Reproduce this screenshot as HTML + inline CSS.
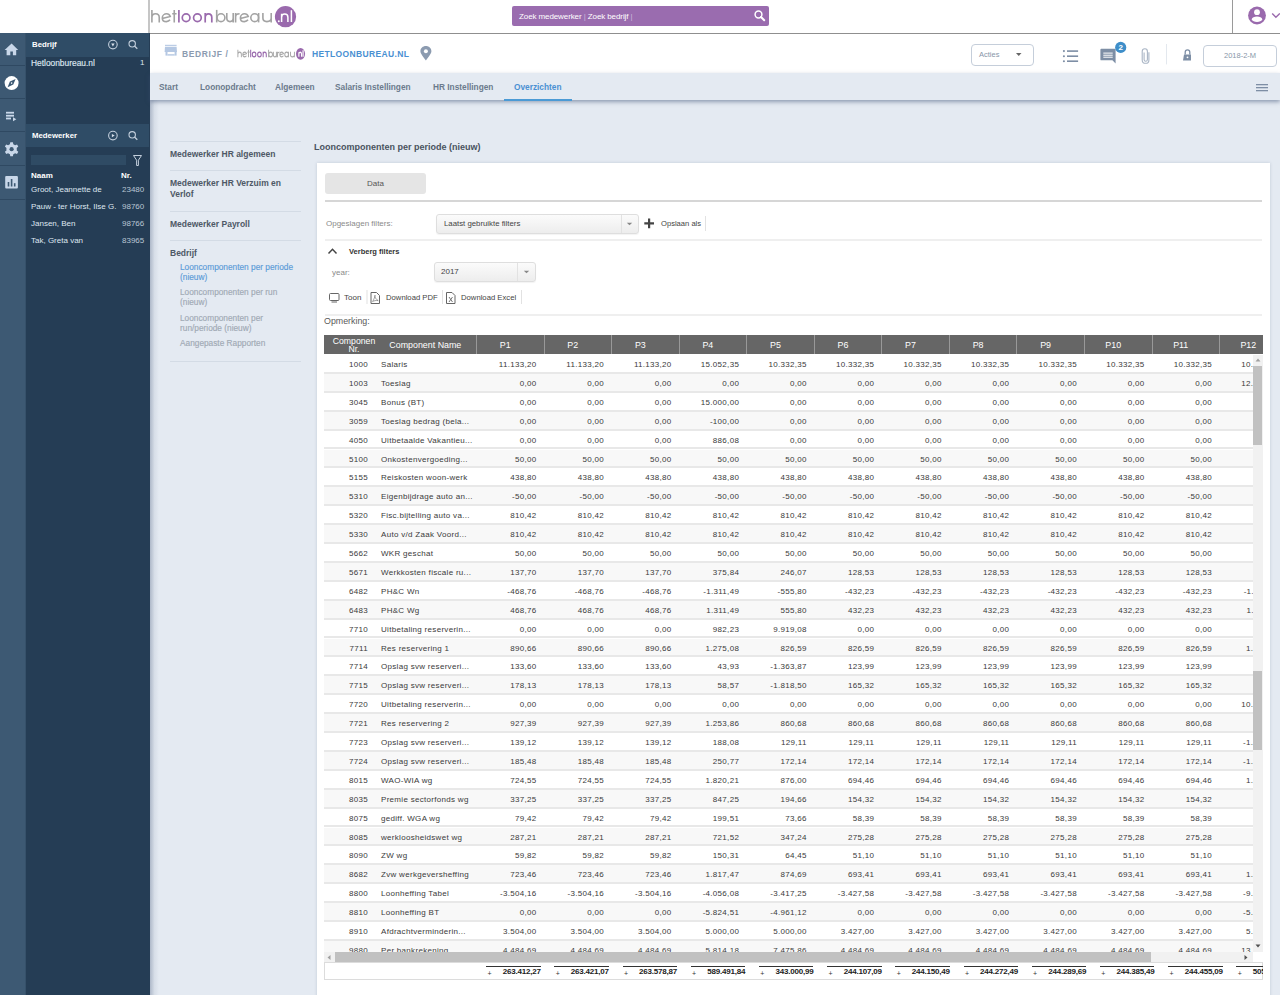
<!DOCTYPE html>
<html><head><meta charset="utf-8">
<style>
*{box-sizing:border-box;margin:0;padding:0}
html,body{width:1280px;height:995px;overflow:hidden}
body{position:relative;background:#e4eaf2;font-family:"Liberation Sans",sans-serif;color:#333}
.a{position:absolute}
svg.a{overflow:visible}
/* top bar */
#top{left:0;top:0;width:1280px;height:34px;background:#fff;border-bottom:1px solid #8f8f8f}
#vl1{left:148px;top:0;width:2px;height:33px;background:#c6c6c6}
#vl2{left:1232px;top:0;width:1px;height:33px;background:#9a9a9a}
#search{left:512px;top:6px;width:257px;height:20px;background:#9a6caf;border-radius:2px}
#search span{position:absolute;left:7px;top:6px;font-size:8px;color:#fff;white-space:nowrap;letter-spacing:-0.1px}
/* rails */
#rail{left:0;top:33px;width:26px;height:962px;background:#3d5973;border-right:1px solid #36516a}
.rsep{left:0;width:25px;height:1px;background:#2f4962}
#side{left:26px;top:33px;width:123.5px;height:962px;background:#253d55}
.sh{left:26px;width:123px;height:23px;background:#2f4c66}
.sht{font-size:7.8px;font-weight:bold;color:#fff;white-space:nowrap}
.st{font-size:8px;color:#dfe7f0;white-space:nowrap}
.stb{font-size:8px;color:#fff;font-weight:bold;white-space:nowrap}
.sn{font-size:8px;color:#b9c6d4;white-space:nowrap}
/* breadcrumb */
#bc{left:150px;top:34px;width:1130px;height:39px;background:#fff}
#tabs{left:150px;top:73px;width:1130px;height:27px;background:#e4eaf2;box-shadow:0 2px 4px rgba(60,80,115,.5)}
.tab{top:82px;font-size:8.3px;font-weight:bold;color:#6b7a8c;white-space:nowrap}
#shadowL{left:150px;top:100px;width:9px;height:895px;background:linear-gradient(to right,rgba(60,80,115,.32),rgba(60,80,115,.08) 50%,rgba(60,80,115,0))}
/* left menu */
.ml{left:170px;width:131px;height:1px;background:#d3dbe5}
.mt{left:170px;font-size:8.5px;font-weight:bold;color:#4e5866;white-space:nowrap;line-height:11px}
.ms{left:180px;font-size:8.3px;color:#a0a9b4;white-space:nowrap;line-height:10px;-webkit-text-stroke:0.15px currentColor}
/* card */
#title{left:314px;top:142px;font-size:9px;font-weight:bold;color:#49535f;white-space:nowrap}
#card{left:317px;top:163px;width:953px;height:840px;background:#fff;box-shadow:0 0 3px rgba(40,60,90,.18)}
.ln{height:2px;background:#efefef}
.lbl{font-size:8px;color:#8a8a8a;white-space:nowrap}
.sel{background:linear-gradient(#fbfbfb,#ededed);border:1px solid #dedede;border-radius:3px;box-shadow:0 1px 1px rgba(0,0,0,.05)}
.vs{width:1px;background:#e2e2e2}
/* table */
#tbl{left:324px;top:335px;width:939px;height:645px;overflow:hidden}
#thead{left:0;top:0;width:939px;height:19px;background:#666}
.th{position:absolute;top:0;height:19px;color:#fff;font-size:8.9px;text-align:center;white-space:nowrap}
.nrh{left:0;width:60px;font-size:8.7px;line-height:8px;top:2px}
.nmh{left:55.3px;width:92px;line-height:21px}
.ph{width:67.5px;line-height:21px;border-left:1px solid #999;padding-right:10px}
#tbody{left:0;top:20px;width:929px;height:597.4px;overflow:hidden}
.r{position:absolute;left:0;width:929px;height:18.9px;background:#fff;border-bottom:2px solid #e8e8e8}
.r.odd{background:#f8f8f8}
.r span{position:absolute;top:5px;font-size:8px;color:#3a3a3a;white-space:nowrap;line-height:9px;letter-spacing:0.3px}
.nr{left:0;width:44px;text-align:right}
.nm{left:57px}
.pv{width:60.5px;text-align:right}
#vsb{left:929px;top:20px;width:10px;height:597.4px;background:#f1f1f1}
#hsb{left:0;top:617.4px;width:929px;height:10px;background:#f1f1f1}
#tot{left:0;top:627.4px;width:939px;height:17.6px;border:1px solid #dcdcdc;background:#fff}
.tc{position:absolute;top:3px;width:68.2px;height:14px}
.tc .plus{position:absolute;left:15px;top:4px;font-size:7px;color:#333}
.tc .tv{position:absolute;right:0;width:54.4px;top:0;font-size:8px;font-weight:bold;text-align:right;color:#222;border-top:1px solid #333;padding-top:1px;line-height:8px;letter-spacing:-0.2px}
</style></head><body>
<div id="top" class="a"></div>
<div id="vl1" class="a"></div>
<div id="vl2" class="a"></div>
<!-- logo -->
<svg class="a" style="left:0;top:0" width="300" height="34" viewBox="0 0 300 34">
 <g fill="none" stroke="#a3a3a3" stroke-width="1.6">
  <path d="M151.9,9.9V22.4M151.9,17.6C151.9,15 153.6,13.8 155.6,13.8C157.6,13.8 159.25,15 159.25,17.6V22.4"/>
  <path d="M162.3,18.6L170.2,16.4C169.6,14.8 168.3,13.8 166.6,13.8C164.3,13.8 162.3,15.6 162.3,17.9C162.3,20 164,21.6 166.4,21.6C167.9,21.6 169.2,20.9 170,19.8"/>
  <path d="M174.25,9.9V22.4M172.2,13.8H176.6"/>
  <path d="M216.7,9.9V22.4"/><circle cx="221" cy="17.7" r="3.9"/>
  <path d="M226.8,13V18C226.8,20.4 228.3,21.6 230,21.6C231.7,21.6 233.2,20.4 233.2,18V13V22.4"/>
  <path d="M235.6,13V22.4M235.6,17C235.6,14.9 237,13.8 239.6,13.8"/>
  <path d="M240.4,18.6L248.2,16.4C247.6,14.8 246.3,13.8 244.6,13.8C242.3,13.8 240.4,15.6 240.4,17.9C240.4,20 242,21.6 244.4,21.6C245.9,21.6 247.2,20.9 248,19.8"/>
  <circle cx="254.7" cy="17.7" r="3.9"/><path d="M258.6,13V22.4"/>
  <path d="M262.9,13V18C262.9,20.4 264.6,21.6 266.9,21.6C269.2,21.6 271.2,20.4 271.2,18V13V22.4"/>
 </g>
 <g fill="none" stroke="#9a6aad" stroke-width="1.7">
  <path d="M178.9,9.9V22.4"/>
  <circle cx="186.1" cy="17.7" r="3.85"/><circle cx="197.4" cy="17.7" r="3.85"/>
  <path d="M205.2,13V22.4M205.2,17.6C205.2,15 206.8,13.8 208.5,13.8C210.2,13.8 211.8,15 211.8,17.6V22.4"/>
 </g>
 <circle cx="285.5" cy="16.7" r="10.6" fill="#9a6aad"/>
 <g fill="none" stroke="#fff" stroke-width="1.5">
  <path d="M281.6,13.8V22M281.6,17.2C281.6,15 282.9,14 284.7,14C286.5,14 287.9,15 287.9,17.2V22"/>
  <path d="M291.4,10.2V22"/>
 </g>
 <circle cx="278.8" cy="21.2" r="0.95" fill="#fff"/>
</svg>
<div id="search" class="a"><span>Zoek medewerker <span style="position:static;color:#cdb6da">|</span> Zoek bedrijf <span style="position:static;color:#cdb6da">|</span></span></div>
<svg class="a" style="left:753px;top:9px" width="14" height="14" viewBox="0 0 14 14"><circle cx="5.5" cy="5.5" r="3.4" fill="none" stroke="#fff" stroke-width="1.5"/><path d="M8,8L11.2,11.2" stroke="#fff" stroke-width="2" stroke-linecap="round"/></svg>
<!-- user icon -->
<svg class="a" style="left:1240px;top:0" width="40" height="34" viewBox="1240 0 40 34">
 <circle cx="1257" cy="15.5" r="8.9" fill="#9a6aad"/>
 <circle cx="1257" cy="12.2" r="2.9" fill="#fff"/>
 <path d="M1251.6,19.6C1252.2,17.4 1254.3,16.6 1257,16.6C1259.7,16.6 1261.8,17.4 1262.4,19.6C1261.6,21.2 1259.5,22.1 1257,22.1C1254.5,22.1 1252.4,21.2 1251.6,19.6Z" fill="#fff"/>
 <path d="M1272.2,13.4L1275.9,17.2L1279.8,13.4" fill="none" stroke="#9a6aad" stroke-width="1.4"/>
</svg>

<div id="rail" class="a"></div>
<div class="a rsep" style="top:65px"></div>
<div class="a rsep" style="top:98px"></div>
<div class="a rsep" style="top:131px"></div>
<div class="a rsep" style="top:165px"></div>
<div class="a rsep" style="top:199px"></div>
<svg class="a" style="left:0;top:34px" width="26" height="170" viewBox="0 34 26 170">
 <path d="M4.6,49.9L11.6,43.6L18.2,49.9H16.2V55.2H12.9V51.6H10.3V55.2H6.6V49.9Z" fill="#c9d7e9"/>
 <circle cx="11.6" cy="83.1" r="7" fill="#fff"/>
 <path d="M7.6,87.2L9.9,81.6L15.6,79L13.3,84.6Z" fill="#3d5973"/><circle cx="11.6" cy="83.1" r="0.8" fill="#fff"/>
 <g fill="#c9d7e9"><rect x="6" y="111.8" width="8" height="1.8"/><rect x="6" y="114.8" width="8" height="1.8"/><rect x="6" y="117.6" width="5" height="1.8"/><path d="M13,117.3L16.3,119.3L13,121.3Z"/></g>
 <g transform="translate(11.6 149.2)" fill="#c9d7e9">
  <path d="M-1.3,-7H1.3L1.7,-5C2.4,-4.8 3,-4.4 3.5,-4L5.4,-4.8L6.7,-2.6L5.1,-1.3C5.2,-0.9 5.2,-0.4 5.2,0C5.2,0.4 5.2,0.9 5.1,1.3L6.7,2.6L5.4,4.8L3.5,4C3,4.4 2.4,4.8 1.7,5L1.3,7H-1.3L-1.7,5C-2.4,4.8 -3,4.4 -3.5,4L-5.4,4.8L-6.7,2.6L-5.1,1.3C-5.2,0.9 -5.2,0.4 -5.2,0C-5.2,-0.4 -5.2,-0.9 -5.1,-1.3L-6.7,-2.6L-5.4,-4.8L-3.5,-4C-3,-4.4 -2.4,-4.8 -1.7,-5Z"/>
 </g>
 <circle cx="11.6" cy="149.2" r="2.1" fill="#3d5973"/>
 <rect x="5.2" y="175.9" width="12.7" height="12.5" rx="1" fill="#c9d7e9"/>
 <g fill="#3d5973"><rect x="7.7" y="182" width="1.6" height="4.5"/><rect x="10.8" y="179" width="1.6" height="7.5"/><rect x="13.9" y="183.2" width="1.6" height="3.3"/></g>
</svg>
<div id="side" class="a"></div>
<div class="a sh" style="top:33px;height:24px"></div>
<div class="a sht" style="left:32px;top:40px">Bedrijf</div>
<div class="a st" style="left:31px;top:57.5px;font-size:8.4px;-webkit-text-stroke:0.15px #dfe7f0">Hetloonbureau.nl</div>
<div class="a st" style="left:140px;top:58px">1</div>
<div class="a sh" style="top:124px"></div>
<div class="a sht" style="left:32px;top:131px">Medewerker</div>
<svg class="a" style="left:100px;top:34px" width="49" height="140" viewBox="100 34 49 140">
 <g fill="none" stroke="#c3cfdc" stroke-width="1.1">
  <circle cx="112.9" cy="44.6" r="4.3"/><circle cx="132.2" cy="43.8" r="3.2"/><path d="M134.5,46.1L137.3,48.7" stroke-width="1.3"/>
  <circle cx="112.9" cy="135.6" r="4.3"/><circle cx="132.2" cy="134.8" r="3.2"/><path d="M134.5,137.1L137.3,139.7" stroke-width="1.3"/>
  <path d="M133.5,155.5H141.5L138.4,160.2V165.5H136.6V160.2Z" stroke-width="1"/>
 </g>
 <path d="M111.2,43.6L114.6,43.6L112.9,46.4Z" fill="#d8e0ea"/>
 <path d="M111.2,134.6L114.6,134.6L112.9,137.4Z" fill="#d8e0ea" transform="rotate(-90 112.9 135.6)"/>
</svg>
<div class="a" style="left:31px;top:155px;width:95px;height:10px;background:#2f4b64"></div>
<div class="a stb" style="left:31px;top:171px">Naam</div>
<div class="a stb" style="left:121px;top:171px">Nr.</div>
<div class="a st" style="left:31px;top:185px">Groot, Jeannette de</div><div class="a sn" style="left:122px;top:185px">23480</div>
<div class="a st" style="left:31px;top:202px">Pauw - ter Horst, Ilse G.</div><div class="a sn" style="left:122px;top:202px">98760</div>
<div class="a st" style="left:31px;top:219px">Jansen, Ben</div><div class="a sn" style="left:122px;top:219px">98766</div>
<div class="a st" style="left:31px;top:236px">Tak, Greta van</div><div class="a sn" style="left:122px;top:236px">83965</div>

<div id="bc" class="a"></div>
<svg class="a" style="left:160px;top:40px" width="22" height="20" viewBox="160 40 22 20">
 <g fill="#b5c8e3"><rect x="165" y="44.8" width="11.6" height="1.1"/><path d="M165,46.8H176.6L177,51.9H164.6Z"/><rect x="165.5" y="51.9" width="2" height="3.7"/><rect x="174.6" y="51.9" width="2" height="3.7"/><rect x="167.5" y="54.2" width="7.1" height="1.4"/></g>
</svg>
<div class="a" style="left:182px;top:48.8px;font-size:8.5px;font-weight:bold;letter-spacing:0.6px;color:#8c9bb0;white-space:nowrap">BEDRIJF /</div>
<svg class="a" style="left:230px;top:40px" width="85" height="26" viewBox="230 40 85 26">
 <g transform="translate(165.88 43.86) scale(0.474 0.6)">
 <g fill="none" stroke="#a8a8a8" stroke-width="2">
  <path d="M151.9,9.9V22.4M151.9,17.6C151.9,15 153.6,13.8 155.6,13.8C157.6,13.8 159.25,15 159.25,17.6V22.4"/>
  <path d="M162.3,18.6L170.2,16.4C169.6,14.8 168.3,13.8 166.6,13.8C164.3,13.8 162.3,15.6 162.3,17.9C162.3,20 164,21.6 166.4,21.6C167.9,21.6 169.2,20.9 170,19.8"/>
  <path d="M174.25,9.9V22.4M172.2,13.8H176.6"/>
  <path d="M216.7,9.9V22.4"/><circle cx="221" cy="17.7" r="3.9"/>
  <path d="M226.8,13V18C226.8,20.4 228.3,21.6 230,21.6C231.7,21.6 233.2,20.4 233.2,18V13V22.4"/>
  <path d="M235.6,13V22.4M235.6,17C235.6,14.9 237,13.8 239.6,13.8"/>
  <path d="M240.4,18.6L248.2,16.4C247.6,14.8 246.3,13.8 244.6,13.8C242.3,13.8 240.4,15.6 240.4,17.9C240.4,20 242,21.6 244.4,21.6C245.9,21.6 247.2,20.9 248,19.8"/>
  <circle cx="254.7" cy="17.7" r="3.9"/><path d="M258.6,13V22.4"/>
  <path d="M262.9,13V18C262.9,20.4 264.6,21.6 266.9,21.6C269.2,21.6 271.2,20.4 271.2,18V13V22.4"/>
 </g>
 <g fill="none" stroke="#9a6aad" stroke-width="2.2">
  <path d="M178.9,9.9V22.4"/><circle cx="186.1" cy="17.7" r="3.85"/><circle cx="197.4" cy="17.7" r="3.85"/>
  <path d="M205.2,13V22.4M205.2,17.6C205.2,15 206.8,13.8 208.5,13.8C210.2,13.8 211.8,15 211.8,17.6V22.4"/>
 </g>
 </g>
 <g transform="translate(178.07 44.48) scale(0.429 0.561)">
 <circle cx="285.5" cy="16.7" r="10.6" fill="#9a6aad"/>
 <g fill="none" stroke="#fff" stroke-width="2.6"><path d="M281.6,13.8V22M281.6,17.2C281.6,15 282.9,14 284.7,14C286.5,14 287.9,15 287.9,17.2V22"/><path d="M291.4,10.2V22"/></g>
 </g>
</svg>
<div class="a" style="left:312px;top:48.8px;font-size:8.5px;font-weight:bold;letter-spacing:0.35px;color:#4a90d2;white-space:nowrap">HETLOONBUREAU.NL</div>
<svg class="a" style="left:418px;top:44px" width="16" height="18" viewBox="418 44 16 18">
 <path d="M425.9,60.5C423.5,57.2 420.4,53.4 420.4,51.2C420.4,48.2 422.9,46 425.9,46C428.9,46 431.4,48.2 431.4,51.2C431.4,53.4 428.3,57.2 425.9,60.5Z" fill="#8c9bb0"/>
 <circle cx="425.9" cy="51.2" r="2" fill="#fff"/>
</svg>

<div class="a" style="left:971px;top:44px;width:63px;height:22px;border:1px solid #c5ceda;border-radius:4px;background:#fff"></div>
<div class="a" style="left:979px;top:50px;font-size:7.5px;color:#8796a8">Acties</div>
<svg class="a" style="left:1014px;top:51px" width="10" height="8"><path d="M2,2H7.5L4.75,5Z" fill="#666"/></svg>
<svg class="a" style="left:1060px;top:44px" width="140" height="22" viewBox="1060 44 140 22">
 <g fill="#7d8ea5">
  <circle cx="1063.9" cy="51.1" r="1.05"/><circle cx="1063.9" cy="56.2" r="1.05"/><circle cx="1063.9" cy="61.2" r="1.05"/>
  <rect x="1067" y="50.3" width="11.1" height="1.6"/><rect x="1067" y="55.4" width="11.1" height="1.6"/><rect x="1067" y="60.4" width="11.1" height="1.6"/>
  <path d="M1101.3,48.8H1114.7Q1115.6,48.8 1115.6,49.7V63.4L1112.4,60.3H1101.3Q1100.4,60.3 1100.4,59.4V49.7Q1100.4,48.8 1101.3,48.8Z"/>
  <path d="M1184,54.4H1191V60.5H1183Z"/>
 </g>
 <g fill="#fff"><rect x="1103.3" y="52.6" width="9.4" height="1"/><rect x="1103.3" y="54.7" width="9.4" height="1"/><rect x="1103.3" y="56.7" width="9.4" height="1"/></g>
 <path d="M1185.2,54.4V52.3C1185.2,50.9 1186.2,49.9 1187.5,49.9C1188.8,49.9 1189.8,50.9 1189.8,52.3V54.4" fill="none" stroke="#7d8ea5" stroke-width="1.3"/>
 <circle cx="1187.5" cy="57.3" r="0.9" fill="#fff"/>
 <circle cx="1120.7" cy="47.4" r="5.6" fill="#3e8ec9"/>
 <text x="1120.7" y="50.3" font-family="Liberation Sans" font-size="8" font-weight="bold" fill="#fff" text-anchor="middle">2</text>
 <path d="M1148.9,52.2V59.9C1148.9,62.1 1147.6,63.3 1145.7,63.3C1143.8,63.3 1142.2,62.1 1142.2,59.9V51.4C1142.2,49.6 1143.3,48.7 1144.9,48.7C1146.5,48.7 1147.4,49.6 1147.4,51.4V59.4C1147.4,60.6 1146.6,61.2 1145.7,61.2C1144.8,61.2 1144.1,60.6 1144.1,59.4V52.5" fill="none" stroke="#a9b5c5" stroke-width="1.1"/>
 <rect x="1166" y="44" width="1" height="20.4" fill="#e3e8ee"/>
</svg>
<div class="a" style="left:1203px;top:45px;width:74px;height:22px;border:1px solid #c5ceda;border-radius:4px;background:#fff"></div>
<div class="a" style="left:1224px;top:51px;font-size:7.5px;color:#8796a8">2018-2-M</div>

<div id="tabs" class="a"></div>
<div class="a tab" style="left:159px">Start</div>
<div class="a tab" style="left:200px">Loonopdracht</div>
<div class="a tab" style="left:275px">Algemeen</div>
<div class="a tab" style="left:335px">Salaris Instellingen</div>
<div class="a tab" style="left:433px">HR Instellingen</div>
<div class="a tab" style="left:514px;color:#4a90d2">Overzichten</div>
<div class="a" style="left:504px;top:99px;width:68px;height:2px;background:#4b9ad5"></div>
<svg class="a" style="left:1254px;top:82px" width="16" height="12"><g fill="#7d8ea5"><rect x="2" y="2" width="12" height="1.3"/><rect x="2" y="5" width="12" height="1.3"/><rect x="2" y="8" width="12" height="1.3"/></g></svg>
<div id="shadowL" class="a"></div>

<div class="a ml" style="top:141px"></div>
<div class="a mt" style="top:149px">Medewerker HR algemeen</div>
<div class="a ml" style="top:170px"></div>
<div class="a mt" style="top:178px">Medewerker HR Verzuim en<br>Verlof</div>
<div class="a ml" style="top:211px"></div>
<div class="a mt" style="top:219px">Medewerker Payroll</div>
<div class="a ml" style="top:240px"></div>
<div class="a mt" style="top:248px">Bedrijf</div>
<div class="a ms" style="top:262px;color:#5b9bd8">Looncomponenten per periode<br>(nieuw)</div>
<div class="a ms" style="top:287px">Looncomponenten per run<br>(nieuw)</div>
<div class="a ms" style="top:313px">Looncomponenten per<br>run/periode (nieuw)</div>
<div class="a ms" style="top:338px">Aangepaste Rapporten</div>
<div class="a ml" style="top:361px"></div>

<div id="title" class="a">Looncomponenten per periode (nieuw)</div>
<div id="card" class="a"></div>
<div class="a" style="left:325px;top:173px;width:101px;height:21px;background:#e5e5e5;border-radius:3px"></div>
<div class="a" style="left:367px;top:179px;font-size:8px;color:#555">Data</div>
<div class="a" style="left:325px;top:200px;width:937px;height:2px;background:#d6d6d6"></div>
<div class="a lbl" style="left:326px;top:219px">Opgeslagen filters:</div>
<div class="a sel" style="left:436px;top:214px;width:203px;height:20px"></div>
<div class="a vs" style="left:621px;top:215px;height:18px"></div>
<svg class="a" style="left:626px;top:222px" width="8" height="4"><path d="M0.8,0.8H6.2L3.5,3.2Z" fill="#888"/></svg>
<div class="a" style="left:444px;top:219px;font-size:7.8px;color:#444">Laatst gebruikte filters</div>
<svg class="a" style="left:644px;top:218px" width="11" height="11"><path d="M4,0.5H6.2V4.3H10V6.5H6.2V10.3H4V6.5H0.3V4.3H4Z" fill="#444"/></svg>
<div class="a" style="left:661px;top:219px;font-size:7.6px;color:#444">Opslaan als</div>
<div class="a vs" style="left:705px;top:216px;height:15px"></div>
<div class="a ln" style="left:325px;top:239px;width:937px"></div>
<svg class="a" style="left:327px;top:247px" width="11" height="8"><path d="M1.5,6.5L5.5,2.3L9.5,6.5" fill="none" stroke="#444" stroke-width="1.5"/></svg>
<div class="a" style="left:349px;top:247px;font-size:7.5px;font-weight:bold;color:#333">Verberg filters</div>
<div class="a lbl" style="left:332px;top:268px">year:</div>
<div class="a sel" style="left:434px;top:262px;width:102px;height:20px"></div>
<div class="a vs" style="left:517px;top:263px;height:18px"></div>
<svg class="a" style="left:523px;top:270px" width="8" height="4"><path d="M0.8,0.8H6.2L3.5,3.2Z" fill="#888"/></svg>
<div class="a" style="left:441px;top:267px;font-size:8px;color:#444">2017</div>
<svg class="a" style="left:326px;top:290px" width="200" height="16" viewBox="326 290 200 16">
 <g fill="none" stroke="#666" stroke-width="1">
  <rect x="329.5" y="293.5" width="9.5" height="7" rx="1"/><path d="M331.5,302H337"/>
  <path d="M371,292.5H376.5L379.5,295.5V303.5H371Z"/><path d="M372.6,301.6C374,299 375,297 375,295.2C374.2,296.8 376.2,299.6 378.2,300.6C376,300.2 373.8,300.8 372.6,301.6Z" stroke-width="0.6"/>
  <path d="M446.5,292.5H452L455,295.5V303.5H446.5Z"/><path d="M449,297L452.5,302M452.5,297L449,302" stroke-width="0.9"/>
 </g>
 <g fill="#e2e2e2"><rect x="366.5" y="290" width="1" height="14"/><rect x="442" y="290" width="1" height="14"/><rect x="521" y="290" width="1" height="14"/></g>
</svg>
<div class="a" style="left:344px;top:293px;font-size:8px;color:#444">Toon</div>
<div class="a" style="left:386px;top:293px;font-size:7.7px;color:#444">Download PDF</div>
<div class="a" style="left:461px;top:293px;font-size:7.7px;color:#444">Download Excel</div>
<div class="a ln" style="left:325px;top:314px;width:937px"></div>
<div class="a" style="left:324px;top:316px;font-size:8.85px;color:#5a5a5a">Opmerking:</div>

<div id="tbl" class="a">
 <div id="thead" class="a"><div class="th nrh">Componen<br>Nr.</div><div class="th nmh">Component Name</div><div class="th ph" style="left:152.00px">P1</div><div class="th ph" style="left:219.55px">P2</div><div class="th ph" style="left:287.10px">P3</div><div class="th ph" style="left:354.65px">P4</div><div class="th ph" style="left:422.20px">P5</div><div class="th ph" style="left:489.75px">P6</div><div class="th ph" style="left:557.30px">P7</div><div class="th ph" style="left:624.85px">P8</div><div class="th ph" style="left:692.40px">P9</div><div class="th ph" style="left:759.95px">P10</div><div class="th ph" style="left:827.50px">P11</div><div class="th ph" style="left:895.05px">P12</div></div>
 <div id="tbody" class="a">
<div class="r" style="top:0.00px"><span class="nr">1000</span><span class="nm">Salaris</span><span class="pv" style="left:152.00px">11.133,20</span><span class="pv" style="left:219.55px">11.133,20</span><span class="pv" style="left:287.10px">11.133,20</span><span class="pv" style="left:354.65px">15.052,35</span><span class="pv" style="left:422.20px">10.332,35</span><span class="pv" style="left:489.75px">10.332,35</span><span class="pv" style="left:557.30px">10.332,35</span><span class="pv" style="left:624.85px">10.332,35</span><span class="pv" style="left:692.40px">10.332,35</span><span class="pv" style="left:759.95px">10.332,35</span><span class="pv" style="left:827.50px">10.332,35</span><span class="pv" style="left:895.05px">10.332,35</span></div>
<div class="r odd" style="top:18.90px"><span class="nr">1003</span><span class="nm">Toeslag</span><span class="pv" style="left:152.00px">0,00</span><span class="pv" style="left:219.55px">0,00</span><span class="pv" style="left:287.10px">0,00</span><span class="pv" style="left:354.65px">0,00</span><span class="pv" style="left:422.20px">0,00</span><span class="pv" style="left:489.75px">0,00</span><span class="pv" style="left:557.30px">0,00</span><span class="pv" style="left:624.85px">0,00</span><span class="pv" style="left:692.40px">0,00</span><span class="pv" style="left:759.95px">0,00</span><span class="pv" style="left:827.50px">0,00</span><span class="pv" style="left:895.05px">12.332,35</span></div>
<div class="r" style="top:37.80px"><span class="nr">3045</span><span class="nm">Bonus (BT)</span><span class="pv" style="left:152.00px">0,00</span><span class="pv" style="left:219.55px">0,00</span><span class="pv" style="left:287.10px">0,00</span><span class="pv" style="left:354.65px">15.000,00</span><span class="pv" style="left:422.20px">0,00</span><span class="pv" style="left:489.75px">0,00</span><span class="pv" style="left:557.30px">0,00</span><span class="pv" style="left:624.85px">0,00</span><span class="pv" style="left:692.40px">0,00</span><span class="pv" style="left:759.95px">0,00</span><span class="pv" style="left:827.50px">0,00</span><span class="pv" style="left:895.05px">500,00</span></div>
<div class="r odd" style="top:56.70px"><span class="nr">3059</span><span class="nm">Toeslag bedrag (bela...</span><span class="pv" style="left:152.00px">0,00</span><span class="pv" style="left:219.55px">0,00</span><span class="pv" style="left:287.10px">0,00</span><span class="pv" style="left:354.65px">-100,00</span><span class="pv" style="left:422.20px">0,00</span><span class="pv" style="left:489.75px">0,00</span><span class="pv" style="left:557.30px">0,00</span><span class="pv" style="left:624.85px">0,00</span><span class="pv" style="left:692.40px">0,00</span><span class="pv" style="left:759.95px">0,00</span><span class="pv" style="left:827.50px">0,00</span><span class="pv" style="left:895.05px">500,00</span></div>
<div class="r" style="top:75.60px"><span class="nr">4050</span><span class="nm">Uitbetaalde Vakantieu...</span><span class="pv" style="left:152.00px">0,00</span><span class="pv" style="left:219.55px">0,00</span><span class="pv" style="left:287.10px">0,00</span><span class="pv" style="left:354.65px">886,08</span><span class="pv" style="left:422.20px">0,00</span><span class="pv" style="left:489.75px">0,00</span><span class="pv" style="left:557.30px">0,00</span><span class="pv" style="left:624.85px">0,00</span><span class="pv" style="left:692.40px">0,00</span><span class="pv" style="left:759.95px">0,00</span><span class="pv" style="left:827.50px">0,00</span><span class="pv" style="left:895.05px">500,00</span></div>
<div class="r odd" style="top:94.50px"><span class="nr">5100</span><span class="nm">Onkostenvergoeding...</span><span class="pv" style="left:152.00px">50,00</span><span class="pv" style="left:219.55px">50,00</span><span class="pv" style="left:287.10px">50,00</span><span class="pv" style="left:354.65px">50,00</span><span class="pv" style="left:422.20px">50,00</span><span class="pv" style="left:489.75px">50,00</span><span class="pv" style="left:557.30px">50,00</span><span class="pv" style="left:624.85px">50,00</span><span class="pv" style="left:692.40px">50,00</span><span class="pv" style="left:759.95px">50,00</span><span class="pv" style="left:827.50px">50,00</span><span class="pv" style="left:895.05px">500,00</span></div>
<div class="r" style="top:113.40px"><span class="nr">5155</span><span class="nm">Reiskosten woon-werk</span><span class="pv" style="left:152.00px">438,80</span><span class="pv" style="left:219.55px">438,80</span><span class="pv" style="left:287.10px">438,80</span><span class="pv" style="left:354.65px">438,80</span><span class="pv" style="left:422.20px">438,80</span><span class="pv" style="left:489.75px">438,80</span><span class="pv" style="left:557.30px">438,80</span><span class="pv" style="left:624.85px">438,80</span><span class="pv" style="left:692.40px">438,80</span><span class="pv" style="left:759.95px">438,80</span><span class="pv" style="left:827.50px">438,80</span><span class="pv" style="left:895.05px">500,00</span></div>
<div class="r odd" style="top:132.30px"><span class="nr">5310</span><span class="nm">Eigenbijdrage auto an...</span><span class="pv" style="left:152.00px">-50,00</span><span class="pv" style="left:219.55px">-50,00</span><span class="pv" style="left:287.10px">-50,00</span><span class="pv" style="left:354.65px">-50,00</span><span class="pv" style="left:422.20px">-50,00</span><span class="pv" style="left:489.75px">-50,00</span><span class="pv" style="left:557.30px">-50,00</span><span class="pv" style="left:624.85px">-50,00</span><span class="pv" style="left:692.40px">-50,00</span><span class="pv" style="left:759.95px">-50,00</span><span class="pv" style="left:827.50px">-50,00</span><span class="pv" style="left:895.05px">500,00</span></div>
<div class="r" style="top:151.20px"><span class="nr">5320</span><span class="nm">Fisc.bijtelling auto va...</span><span class="pv" style="left:152.00px">810,42</span><span class="pv" style="left:219.55px">810,42</span><span class="pv" style="left:287.10px">810,42</span><span class="pv" style="left:354.65px">810,42</span><span class="pv" style="left:422.20px">810,42</span><span class="pv" style="left:489.75px">810,42</span><span class="pv" style="left:557.30px">810,42</span><span class="pv" style="left:624.85px">810,42</span><span class="pv" style="left:692.40px">810,42</span><span class="pv" style="left:759.95px">810,42</span><span class="pv" style="left:827.50px">810,42</span><span class="pv" style="left:895.05px">500,00</span></div>
<div class="r odd" style="top:170.10px"><span class="nr">5330</span><span class="nm">Auto v/d Zaak Voord...</span><span class="pv" style="left:152.00px">810,42</span><span class="pv" style="left:219.55px">810,42</span><span class="pv" style="left:287.10px">810,42</span><span class="pv" style="left:354.65px">810,42</span><span class="pv" style="left:422.20px">810,42</span><span class="pv" style="left:489.75px">810,42</span><span class="pv" style="left:557.30px">810,42</span><span class="pv" style="left:624.85px">810,42</span><span class="pv" style="left:692.40px">810,42</span><span class="pv" style="left:759.95px">810,42</span><span class="pv" style="left:827.50px">810,42</span><span class="pv" style="left:895.05px">500,00</span></div>
<div class="r" style="top:189.00px"><span class="nr">5662</span><span class="nm">WKR geschat</span><span class="pv" style="left:152.00px">50,00</span><span class="pv" style="left:219.55px">50,00</span><span class="pv" style="left:287.10px">50,00</span><span class="pv" style="left:354.65px">50,00</span><span class="pv" style="left:422.20px">50,00</span><span class="pv" style="left:489.75px">50,00</span><span class="pv" style="left:557.30px">50,00</span><span class="pv" style="left:624.85px">50,00</span><span class="pv" style="left:692.40px">50,00</span><span class="pv" style="left:759.95px">50,00</span><span class="pv" style="left:827.50px">50,00</span><span class="pv" style="left:895.05px">500,00</span></div>
<div class="r odd" style="top:207.90px"><span class="nr">5671</span><span class="nm">Werkkosten fiscale ru...</span><span class="pv" style="left:152.00px">137,70</span><span class="pv" style="left:219.55px">137,70</span><span class="pv" style="left:287.10px">137,70</span><span class="pv" style="left:354.65px">375,84</span><span class="pv" style="left:422.20px">246,07</span><span class="pv" style="left:489.75px">128,53</span><span class="pv" style="left:557.30px">128,53</span><span class="pv" style="left:624.85px">128,53</span><span class="pv" style="left:692.40px">128,53</span><span class="pv" style="left:759.95px">128,53</span><span class="pv" style="left:827.50px">128,53</span><span class="pv" style="left:895.05px">500,00</span></div>
<div class="r" style="top:226.80px"><span class="nr">6482</span><span class="nm">PH&amp;C Wn</span><span class="pv" style="left:152.00px">-468,76</span><span class="pv" style="left:219.55px">-468,76</span><span class="pv" style="left:287.10px">-468,76</span><span class="pv" style="left:354.65px">-1.311,49</span><span class="pv" style="left:422.20px">-555,80</span><span class="pv" style="left:489.75px">-432,23</span><span class="pv" style="left:557.30px">-432,23</span><span class="pv" style="left:624.85px">-432,23</span><span class="pv" style="left:692.40px">-432,23</span><span class="pv" style="left:759.95px">-432,23</span><span class="pv" style="left:827.50px">-432,23</span><span class="pv" style="left:895.05px">-1.311,49</span></div>
<div class="r odd" style="top:245.70px"><span class="nr">6483</span><span class="nm">PH&amp;C Wg</span><span class="pv" style="left:152.00px">468,76</span><span class="pv" style="left:219.55px">468,76</span><span class="pv" style="left:287.10px">468,76</span><span class="pv" style="left:354.65px">1.311,49</span><span class="pv" style="left:422.20px">555,80</span><span class="pv" style="left:489.75px">432,23</span><span class="pv" style="left:557.30px">432,23</span><span class="pv" style="left:624.85px">432,23</span><span class="pv" style="left:692.40px">432,23</span><span class="pv" style="left:759.95px">432,23</span><span class="pv" style="left:827.50px">432,23</span><span class="pv" style="left:895.05px">1.311,49</span></div>
<div class="r" style="top:264.60px"><span class="nr">7710</span><span class="nm">Uitbetaling reserverin...</span><span class="pv" style="left:152.00px">0,00</span><span class="pv" style="left:219.55px">0,00</span><span class="pv" style="left:287.10px">0,00</span><span class="pv" style="left:354.65px">982,23</span><span class="pv" style="left:422.20px">9.919,08</span><span class="pv" style="left:489.75px">0,00</span><span class="pv" style="left:557.30px">0,00</span><span class="pv" style="left:624.85px">0,00</span><span class="pv" style="left:692.40px">0,00</span><span class="pv" style="left:759.95px">0,00</span><span class="pv" style="left:827.50px">0,00</span><span class="pv" style="left:895.05px">500,00</span></div>
<div class="r odd" style="top:283.50px"><span class="nr">7711</span><span class="nm">Res reservering 1</span><span class="pv" style="left:152.00px">890,66</span><span class="pv" style="left:219.55px">890,66</span><span class="pv" style="left:287.10px">890,66</span><span class="pv" style="left:354.65px">1.275,08</span><span class="pv" style="left:422.20px">826,59</span><span class="pv" style="left:489.75px">826,59</span><span class="pv" style="left:557.30px">826,59</span><span class="pv" style="left:624.85px">826,59</span><span class="pv" style="left:692.40px">826,59</span><span class="pv" style="left:759.95px">826,59</span><span class="pv" style="left:827.50px">826,59</span><span class="pv" style="left:895.05px">1.275,08</span></div>
<div class="r" style="top:302.40px"><span class="nr">7714</span><span class="nm">Opslag svw reserveri...</span><span class="pv" style="left:152.00px">133,60</span><span class="pv" style="left:219.55px">133,60</span><span class="pv" style="left:287.10px">133,60</span><span class="pv" style="left:354.65px">43,93</span><span class="pv" style="left:422.20px">-1.363,87</span><span class="pv" style="left:489.75px">123,99</span><span class="pv" style="left:557.30px">123,99</span><span class="pv" style="left:624.85px">123,99</span><span class="pv" style="left:692.40px">123,99</span><span class="pv" style="left:759.95px">123,99</span><span class="pv" style="left:827.50px">123,99</span><span class="pv" style="left:895.05px">500,00</span></div>
<div class="r odd" style="top:321.30px"><span class="nr">7715</span><span class="nm">Opslag svw reserveri...</span><span class="pv" style="left:152.00px">178,13</span><span class="pv" style="left:219.55px">178,13</span><span class="pv" style="left:287.10px">178,13</span><span class="pv" style="left:354.65px">58,57</span><span class="pv" style="left:422.20px">-1.818,50</span><span class="pv" style="left:489.75px">165,32</span><span class="pv" style="left:557.30px">165,32</span><span class="pv" style="left:624.85px">165,32</span><span class="pv" style="left:692.40px">165,32</span><span class="pv" style="left:759.95px">165,32</span><span class="pv" style="left:827.50px">165,32</span><span class="pv" style="left:895.05px">500,00</span></div>
<div class="r" style="top:340.20px"><span class="nr">7720</span><span class="nm">Uitbetaling reserverin...</span><span class="pv" style="left:152.00px">0,00</span><span class="pv" style="left:219.55px">0,00</span><span class="pv" style="left:287.10px">0,00</span><span class="pv" style="left:354.65px">0,00</span><span class="pv" style="left:422.20px">0,00</span><span class="pv" style="left:489.75px">0,00</span><span class="pv" style="left:557.30px">0,00</span><span class="pv" style="left:624.85px">0,00</span><span class="pv" style="left:692.40px">0,00</span><span class="pv" style="left:759.95px">0,00</span><span class="pv" style="left:827.50px">0,00</span><span class="pv" style="left:895.05px">10.919,08</span></div>
<div class="r odd" style="top:359.10px"><span class="nr">7721</span><span class="nm">Res reservering 2</span><span class="pv" style="left:152.00px">927,39</span><span class="pv" style="left:219.55px">927,39</span><span class="pv" style="left:287.10px">927,39</span><span class="pv" style="left:354.65px">1.253,86</span><span class="pv" style="left:422.20px">860,68</span><span class="pv" style="left:489.75px">860,68</span><span class="pv" style="left:557.30px">860,68</span><span class="pv" style="left:624.85px">860,68</span><span class="pv" style="left:692.40px">860,68</span><span class="pv" style="left:759.95px">860,68</span><span class="pv" style="left:827.50px">860,68</span><span class="pv" style="left:895.05px">500,00</span></div>
<div class="r" style="top:378.00px"><span class="nr">7723</span><span class="nm">Opslag svw reserveri...</span><span class="pv" style="left:152.00px">139,12</span><span class="pv" style="left:219.55px">139,12</span><span class="pv" style="left:287.10px">139,12</span><span class="pv" style="left:354.65px">188,08</span><span class="pv" style="left:422.20px">129,11</span><span class="pv" style="left:489.75px">129,11</span><span class="pv" style="left:557.30px">129,11</span><span class="pv" style="left:624.85px">129,11</span><span class="pv" style="left:692.40px">129,11</span><span class="pv" style="left:759.95px">129,11</span><span class="pv" style="left:827.50px">129,11</span><span class="pv" style="left:895.05px">-1.188,08</span></div>
<div class="r odd" style="top:396.90px"><span class="nr">7724</span><span class="nm">Opslag svw reserveri...</span><span class="pv" style="left:152.00px">185,48</span><span class="pv" style="left:219.55px">185,48</span><span class="pv" style="left:287.10px">185,48</span><span class="pv" style="left:354.65px">250,77</span><span class="pv" style="left:422.20px">172,14</span><span class="pv" style="left:489.75px">172,14</span><span class="pv" style="left:557.30px">172,14</span><span class="pv" style="left:624.85px">172,14</span><span class="pv" style="left:692.40px">172,14</span><span class="pv" style="left:759.95px">172,14</span><span class="pv" style="left:827.50px">172,14</span><span class="pv" style="left:895.05px">-1.250,77</span></div>
<div class="r" style="top:415.80px"><span class="nr">8015</span><span class="nm">WAO-WIA wg</span><span class="pv" style="left:152.00px">724,55</span><span class="pv" style="left:219.55px">724,55</span><span class="pv" style="left:287.10px">724,55</span><span class="pv" style="left:354.65px">1.820,21</span><span class="pv" style="left:422.20px">876,00</span><span class="pv" style="left:489.75px">694,46</span><span class="pv" style="left:557.30px">694,46</span><span class="pv" style="left:624.85px">694,46</span><span class="pv" style="left:692.40px">694,46</span><span class="pv" style="left:759.95px">694,46</span><span class="pv" style="left:827.50px">694,46</span><span class="pv" style="left:895.05px">1.820,21</span></div>
<div class="r odd" style="top:434.70px"><span class="nr">8035</span><span class="nm">Premie sectorfonds wg</span><span class="pv" style="left:152.00px">337,25</span><span class="pv" style="left:219.55px">337,25</span><span class="pv" style="left:287.10px">337,25</span><span class="pv" style="left:354.65px">847,25</span><span class="pv" style="left:422.20px">194,66</span><span class="pv" style="left:489.75px">154,32</span><span class="pv" style="left:557.30px">154,32</span><span class="pv" style="left:624.85px">154,32</span><span class="pv" style="left:692.40px">154,32</span><span class="pv" style="left:759.95px">154,32</span><span class="pv" style="left:827.50px">154,32</span><span class="pv" style="left:895.05px">500,00</span></div>
<div class="r" style="top:453.60px"><span class="nr">8075</span><span class="nm">gediff. WGA wg</span><span class="pv" style="left:152.00px">79,42</span><span class="pv" style="left:219.55px">79,42</span><span class="pv" style="left:287.10px">79,42</span><span class="pv" style="left:354.65px">199,51</span><span class="pv" style="left:422.20px">73,66</span><span class="pv" style="left:489.75px">58,39</span><span class="pv" style="left:557.30px">58,39</span><span class="pv" style="left:624.85px">58,39</span><span class="pv" style="left:692.40px">58,39</span><span class="pv" style="left:759.95px">58,39</span><span class="pv" style="left:827.50px">58,39</span><span class="pv" style="left:895.05px">500,00</span></div>
<div class="r odd" style="top:472.50px"><span class="nr">8085</span><span class="nm">werkloosheidswet wg</span><span class="pv" style="left:152.00px">287,21</span><span class="pv" style="left:219.55px">287,21</span><span class="pv" style="left:287.10px">287,21</span><span class="pv" style="left:354.65px">721,52</span><span class="pv" style="left:422.20px">347,24</span><span class="pv" style="left:489.75px">275,28</span><span class="pv" style="left:557.30px">275,28</span><span class="pv" style="left:624.85px">275,28</span><span class="pv" style="left:692.40px">275,28</span><span class="pv" style="left:759.95px">275,28</span><span class="pv" style="left:827.50px">275,28</span><span class="pv" style="left:895.05px">500,00</span></div>
<div class="r" style="top:491.40px"><span class="nr">8090</span><span class="nm">ZW wg</span><span class="pv" style="left:152.00px">59,82</span><span class="pv" style="left:219.55px">59,82</span><span class="pv" style="left:287.10px">59,82</span><span class="pv" style="left:354.65px">150,31</span><span class="pv" style="left:422.20px">64,45</span><span class="pv" style="left:489.75px">51,10</span><span class="pv" style="left:557.30px">51,10</span><span class="pv" style="left:624.85px">51,10</span><span class="pv" style="left:692.40px">51,10</span><span class="pv" style="left:759.95px">51,10</span><span class="pv" style="left:827.50px">51,10</span><span class="pv" style="left:895.05px">500,00</span></div>
<div class="r odd" style="top:510.30px"><span class="nr">8682</span><span class="nm">Zvw werkgeversheffing</span><span class="pv" style="left:152.00px">723,46</span><span class="pv" style="left:219.55px">723,46</span><span class="pv" style="left:287.10px">723,46</span><span class="pv" style="left:354.65px">1.817,47</span><span class="pv" style="left:422.20px">874,69</span><span class="pv" style="left:489.75px">693,41</span><span class="pv" style="left:557.30px">693,41</span><span class="pv" style="left:624.85px">693,41</span><span class="pv" style="left:692.40px">693,41</span><span class="pv" style="left:759.95px">693,41</span><span class="pv" style="left:827.50px">693,41</span><span class="pv" style="left:895.05px">1.817,47</span></div>
<div class="r" style="top:529.20px"><span class="nr">8800</span><span class="nm">Loonheffing Tabel</span><span class="pv" style="left:152.00px">-3.504,16</span><span class="pv" style="left:219.55px">-3.504,16</span><span class="pv" style="left:287.10px">-3.504,16</span><span class="pv" style="left:354.65px">-4.056,08</span><span class="pv" style="left:422.20px">-3.417,25</span><span class="pv" style="left:489.75px">-3.427,58</span><span class="pv" style="left:557.30px">-3.427,58</span><span class="pv" style="left:624.85px">-3.427,58</span><span class="pv" style="left:692.40px">-3.427,58</span><span class="pv" style="left:759.95px">-3.427,58</span><span class="pv" style="left:827.50px">-3.427,58</span><span class="pv" style="left:895.05px">-9.056,08</span></div>
<div class="r odd" style="top:548.10px"><span class="nr">8810</span><span class="nm">Loonheffing BT</span><span class="pv" style="left:152.00px">0,00</span><span class="pv" style="left:219.55px">0,00</span><span class="pv" style="left:287.10px">0,00</span><span class="pv" style="left:354.65px">-5.824,51</span><span class="pv" style="left:422.20px">-4.961,12</span><span class="pv" style="left:489.75px">0,00</span><span class="pv" style="left:557.30px">0,00</span><span class="pv" style="left:624.85px">0,00</span><span class="pv" style="left:692.40px">0,00</span><span class="pv" style="left:759.95px">0,00</span><span class="pv" style="left:827.50px">0,00</span><span class="pv" style="left:895.05px">-5.824,51</span></div>
<div class="r" style="top:567.00px"><span class="nr">8910</span><span class="nm">Afdrachtverminderin...</span><span class="pv" style="left:152.00px">3.504,00</span><span class="pv" style="left:219.55px">3.504,00</span><span class="pv" style="left:287.10px">3.504,00</span><span class="pv" style="left:354.65px">5.000,00</span><span class="pv" style="left:422.20px">5.000,00</span><span class="pv" style="left:489.75px">3.427,00</span><span class="pv" style="left:557.30px">3.427,00</span><span class="pv" style="left:624.85px">3.427,00</span><span class="pv" style="left:692.40px">3.427,00</span><span class="pv" style="left:759.95px">3.427,00</span><span class="pv" style="left:827.50px">3.427,00</span><span class="pv" style="left:895.05px">5.000,00</span></div>
<div class="r odd" style="top:585.90px"><span class="nr">9880</span><span class="nm">Per bankrekening</span><span class="pv" style="left:152.00px">4.484,69</span><span class="pv" style="left:219.55px">4.484,69</span><span class="pv" style="left:287.10px">4.484,69</span><span class="pv" style="left:354.65px">5.814,18</span><span class="pv" style="left:422.20px">7.475,86</span><span class="pv" style="left:489.75px">4.484,69</span><span class="pv" style="left:557.30px">4.484,69</span><span class="pv" style="left:624.85px">4.484,69</span><span class="pv" style="left:692.40px">4.484,69</span><span class="pv" style="left:759.95px">4.484,69</span><span class="pv" style="left:827.50px">4.484,69</span><span class="pv" style="left:895.05px">13.814,18</span></div>
 </div>
 <div id="vsb" class="a"><svg class="a" style="left:0;top:0" width="10" height="10"><path d="M2.5,6.5H7.5L5,3.5Z" fill="#a0a0a0"/></svg><div class="a" style="left:0;top:11px;width:9px;height:79px;background:#c1c1c1"></div><div class="a" style="left:0;top:316px;width:9px;height:79px;background:#c1c1c1"></div><svg class="a" style="left:0;top:586px" width="10" height="10"><path d="M2.5,3.5H7.5L5,6.5Z" fill="#505050"/></svg></div>
 <div id="hsb" class="a"><svg class="a" style="left:0;top:0" width="10" height="11"><path d="M6.5,3L3.5,5.5L6.5,8Z" fill="#a0a0a0"/></svg><div class="a" style="left:11px;top:0;width:816px;height:10px;background:#c1c1c1"></div><svg class="a" style="left:917px;top:0" width="10" height="11"><path d="M3.5,3L6.5,5.5L3.5,8Z" fill="#505050"/></svg></div>
 <div id="tot" class="a"><div class="tc" style="left:147.50px"><span class="plus">+</span><span class="tv">263.412,27</span></div><div class="tc" style="left:215.70px"><span class="plus">+</span><span class="tv">263.421,07</span></div><div class="tc" style="left:283.90px"><span class="plus">+</span><span class="tv">263.578,87</span></div><div class="tc" style="left:352.10px"><span class="plus">+</span><span class="tv">589.491,84</span></div><div class="tc" style="left:420.30px"><span class="plus">+</span><span class="tv">343.000,99</span></div><div class="tc" style="left:488.50px"><span class="plus">+</span><span class="tv">244.107,09</span></div><div class="tc" style="left:556.70px"><span class="plus">+</span><span class="tv">244.150,49</span></div><div class="tc" style="left:624.90px"><span class="plus">+</span><span class="tv">244.272,49</span></div><div class="tc" style="left:693.10px"><span class="plus">+</span><span class="tv">244.289,69</span></div><div class="tc" style="left:761.30px"><span class="plus">+</span><span class="tv">244.385,49</span></div><div class="tc" style="left:829.50px"><span class="plus">+</span><span class="tv">244.455,09</span></div><div class="tc" style="left:897.70px"><span class="plus">+</span><span class="tv">505.391,50</span></div></div>
</div>
</body></html>
